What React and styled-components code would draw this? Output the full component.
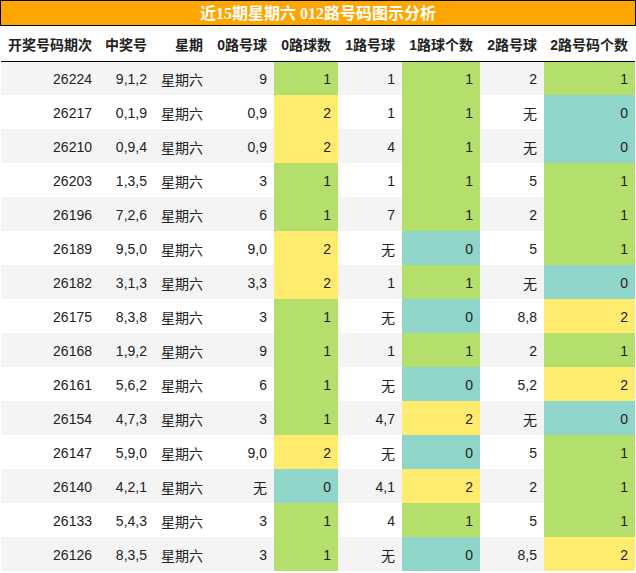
import styled, { createGlobalStyle } from 'styled-components';

const GlobalStyle = createGlobalStyle`
  html, body {
    margin: 0;
    padding: 0;
    background: #fff;
  }
  body {
    font-family: "Liberation Sans", "Noto Sans CJK SC", sans-serif;
    color: #222;
  }
`;

const Wrapper = styled.div`
  width: 636px;
`;

const Title = styled.div`
  height: 24px;
  border: 1px solid #000;
  background: #ffa500;
  color: #fff;
  font-family: "Liberation Serif", "Noto Sans CJK SC", serif;
  font-weight: bold;
  font-size: 16px;
  line-height: 25px;
  text-align: center;
`;

const Table = styled.table`
  border-collapse: collapse;
  margin-left: 1px;
  width: 634px;
  table-layout: fixed;
  font-size: 14px;
`;

const HeadCell = styled.th`
  box-sizing: border-box;
  height: 35px;
  padding: 2px 7px 0 0;
  text-align: right;
  font-weight: bold;
  font-size: 14px;
  color: #222;
  border-bottom: 1px solid #000;
  white-space: nowrap;
`;

const Row = styled.tr`
  background: ${p => (p.$odd ? '#f4f4f4' : '#fff')};
`;

const fills = { 0: '#8fd5c9', 1: '#b4df6d', 2: '#ffeb6e' };

const Cell = styled.td`
  box-sizing: border-box;
  height: 34px;
  padding: 2px 7px 0 0;
  text-align: right;
  white-space: nowrap;
  background: ${p => (p.$count !== undefined ? fills[p.$count] : 'transparent')};
`;

const widths = [98, 55, 56, 64, 64, 64, 78, 64, 91];
const heads = ['开奖号码期次', '中奖号', '星期', '0路号球', '0路球数', '1路号球', '1路球个数', '2路号球', '2路号码个数'];

const rows = [
  ['26224', '9,1,2', '9', 1, '1', 1, '2', 1],
  ['26217', '0,1,9', '0,9', 2, '1', 1, '无', 0],
  ['26210', '0,9,4', '0,9', 2, '4', 1, '无', 0],
  ['26203', '1,3,5', '3', 1, '1', 1, '5', 1],
  ['26196', '7,2,6', '6', 1, '7', 1, '2', 1],
  ['26189', '9,5,0', '9,0', 2, '无', 0, '5', 1],
  ['26182', '3,1,3', '3,3', 2, '1', 1, '无', 0],
  ['26175', '8,3,8', '3', 1, '无', 0, '8,8', 2],
  ['26168', '1,9,2', '9', 1, '1', 1, '2', 1],
  ['26161', '5,6,2', '6', 1, '无', 0, '5,2', 2],
  ['26154', '4,7,3', '3', 1, '4,7', 2, '无', 0],
  ['26147', '5,9,0', '9,0', 2, '无', 0, '5', 1],
  ['26140', '4,2,1', '无', 0, '4,1', 2, '2', 1],
  ['26133', '5,4,3', '3', 1, '4', 1, '5', 1],
  ['26126', '8,3,5', '3', 1, '无', 0, '8,5', 2],
];

export default function App() {
  return (
    <Wrapper>
      <GlobalStyle />
      <Title>近15期星期六 012路号码图示分析</Title>
      <Table>
        <colgroup>
          {widths.map((w, i) => <col key={i} style={{ width: w }} />)}
        </colgroup>
        <thead>
          <tr>
            {heads.map(h => <HeadCell key={h}>{h}</HeadCell>)}
          </tr>
        </thead>
        <tbody>
          {rows.map((r, i) => (
            <Row key={r[0]} $odd={i % 2 === 0}>
              <Cell>{r[0]}</Cell>
              <Cell>{r[1]}</Cell>
              <Cell>星期六</Cell>
              <Cell>{r[2]}</Cell>
              <Cell $count={r[3]}>{r[3]}</Cell>
              <Cell>{r[4]}</Cell>
              <Cell $count={r[5]}>{r[5]}</Cell>
              <Cell>{r[6]}</Cell>
              <Cell $count={r[7]}>{r[7]}</Cell>
            </Row>
          ))}
        </tbody>
      </Table>
    </Wrapper>
  );
}
